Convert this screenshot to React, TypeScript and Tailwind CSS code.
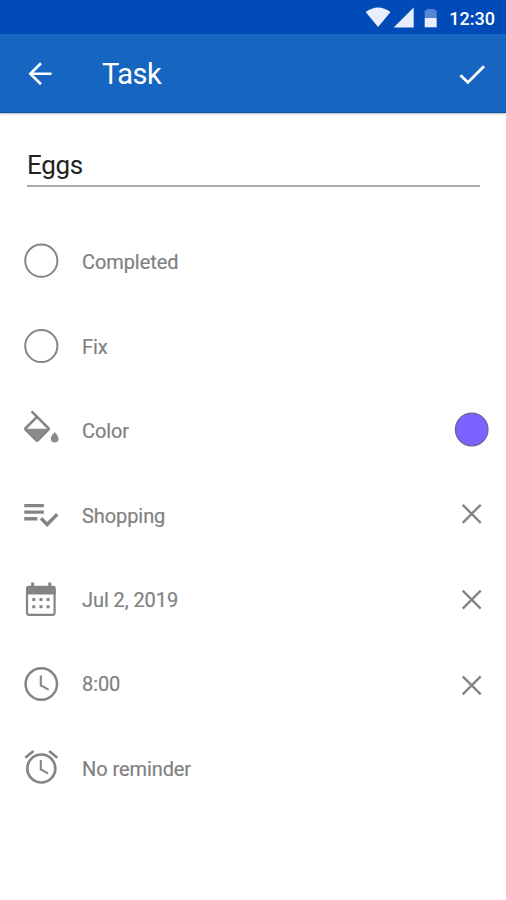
import type { ReactNode } from "react";

function Row({ icon, label, action }: { icon: ReactNode; label: string; action?: ReactNode }) {
  return (
    <li className="flex h-[84.4px] items-center pl-[17px] pr-[10px]">
      <svg className="h-12 w-12 shrink-0" viewBox="0 0 48 48" fill="none" stroke="#858585">
        {icon}
      </svg>
      <span className="ml-[17px] mt-[3px] flex-1 text-[20px] leading-6 tracking-[-0.08px] [-webkit-text-stroke:0.2px_#818181]">{label}</span>
      {action && (
        <svg className="h-12 w-12 shrink-0" viewBox="0 0 48 48" fill="none" stroke="#858585">
          {action}
        </svg>
      )}
    </li>
  );
}

function Cross({ cy }: { cy: number }) {
  return <path transform={`translate(23.7 ${cy})`} d="M-9-9L9 9M9-9L-9 9" strokeWidth="2.4" />;
}

const circle = (cy: number) => <circle cx="24.3" cy={cy} r="16.1" strokeWidth="2" />;

const bucket = (
  <>
    <path d="M14.6 5.4L31.2 22q.9.9 0 1.8L20.9 34.2q-.9.9-1.8 0L8.8 23.8q-.9-.9 0-1.8L20 10.8" strokeWidth="2.6" />
    <path d="M9 22.7h22L20 34z" fill="#8a8a8a" stroke="none" />
    <path d="M37.7 26s-3.9 4-3.9 6.5a3.9 3.9 0 0 0 7.8 0c0-2.5-3.9-6.5-3.9-6.5z" fill="#8a8a8a" stroke="none" />
  </>
);

const list = (
  <path
    transform="translate(4 4.3) scale(1.63)"
    fill="#858585"
    stroke="none"
    d="M14 10H2v2h12v-2zm0-4H2v2h12V6zM2 16h8v-2H2v2zm19.5-4.5L23 13l-6.99 7-4.51-4.5L13 14l3.01 3 5.49-5.5z"
  />
);

const calendar = (
  <>
    <rect x="10" y="12" width="27.6" height="27.8" rx="2" strokeWidth="2.2" />
    <path d="M9 19.5V13q0-2.2 2.2-2.2h25.2q2.2 0 2.2 2.2v6.5z" fill="#858585" stroke="none" />
    <path d="M15.6 7.6v5M32.8 7.6v5" strokeWidth="3" />
    <path d="M15.3 24.5h3M22.5 24.5h3M29.6 24.5h3M15.3 31.7h3M22.5 31.7h3M29.6 31.7h3" strokeWidth="3" />
  </>
);

const clock = (
  <>
    <circle cx="24.3" cy="25" r="15.7" strokeWidth="2.5" />
    <path d="M23.8 16.6v9.8l7.8 4.2" strokeWidth="2.1" />
  </>
);

const alarm = (
  <>
    <circle cx="24.3" cy="25.5" r="14" strokeWidth="2.7" />
    <path d="M23.8 17v9.3l7.2 4.1" strokeWidth="2.1" />
    <path d="M8.3 14.7l8.2-6.7M32.1 8l8.2 6.7" strokeWidth="2.7" />
  </>
);

export default function App() {
  return (
    <div className="h-[900px] w-[506px] overflow-hidden bg-white font-['Roboto','Liberation_Sans',sans-serif] text-[#818181]">
      <div className="flex h-[34px] items-center justify-end bg-[#004bb8] pr-[11px] text-white">
        <svg className="h-[34px] w-[76px]" viewBox="364 0 76 34" fill="#e8eefb">
          <path d="M365.7 12Q378 2.8 390.5 12L378.1 27z" />
          <path d="M413.7 7.5v20h-20z" />
          <path d="M424.7 10.5h2.3V9h7.5v1.5h2.2V18h-12z" fill="#5687d2" />
          <path d="M424.7 18h12v9.3h-12z" />
        </svg>
        <span className="ml-[9px] mt-[3px] text-[18px] font-medium leading-6">12:30</span>
      </div>
      <header className="relative flex h-[79px] items-center border-b border-[#0d50a8] bg-[#1665c0] pl-[24px] pr-[17px] pt-[2px] text-white shadow-[0_1px_2px_rgba(0,0,0,0.3)]">
        <svg className="h-8 w-8" viewBox="0 0 32 32" fill="none" stroke="white" strokeWidth="2.6">
          <path d="M27.5 15.7H6M17 5.2L6.3 15.7 17 26.2" />
        </svg>
        <h1 className="ml-[46px] flex-1 text-[29px] font-normal leading-8 tracking-[-0.5px]">Task</h1>
        <svg className="h-8 w-8" viewBox="0 0 32 32" fill="none" stroke="white" strokeWidth="2.8">
          <path d="M3.5 17.2l7.4 7.2L27 8.3" />
        </svg>
      </header>
      <main>
        <div className="ml-[27px] mr-[26px] mt-[35px] h-[38.5px] border-b-2 border-[#a9a9a9] pt-px text-[26px] leading-8 tracking-[-0.3px] text-[#222]">
          Eggs
        </div>
        <ul className="mt-[32.3px]">
          <Row icon={circle(23.7)} label="Completed" />
          <Row icon={circle(25)} label="Fix" />
          <Row
            icon={bucket}
            label="Color"
            action={<circle cx="23.7" cy="23.5" r="16.3" fill="#7c62ff" stroke="#69619c" strokeWidth="1.2" />}
          />
          <Row icon={list} label="Shopping" action={<Cross cy={23.8} />} />
          <Row icon={calendar} label="Jul 2, 2019" action={<Cross cy={24.7} />} />
          <Row icon={clock} label="8:00" action={<Cross cy={26.3} />} />
          <Row icon={alarm} label="No reminder" />
        </ul>
      </main>
    </div>
  );
}
